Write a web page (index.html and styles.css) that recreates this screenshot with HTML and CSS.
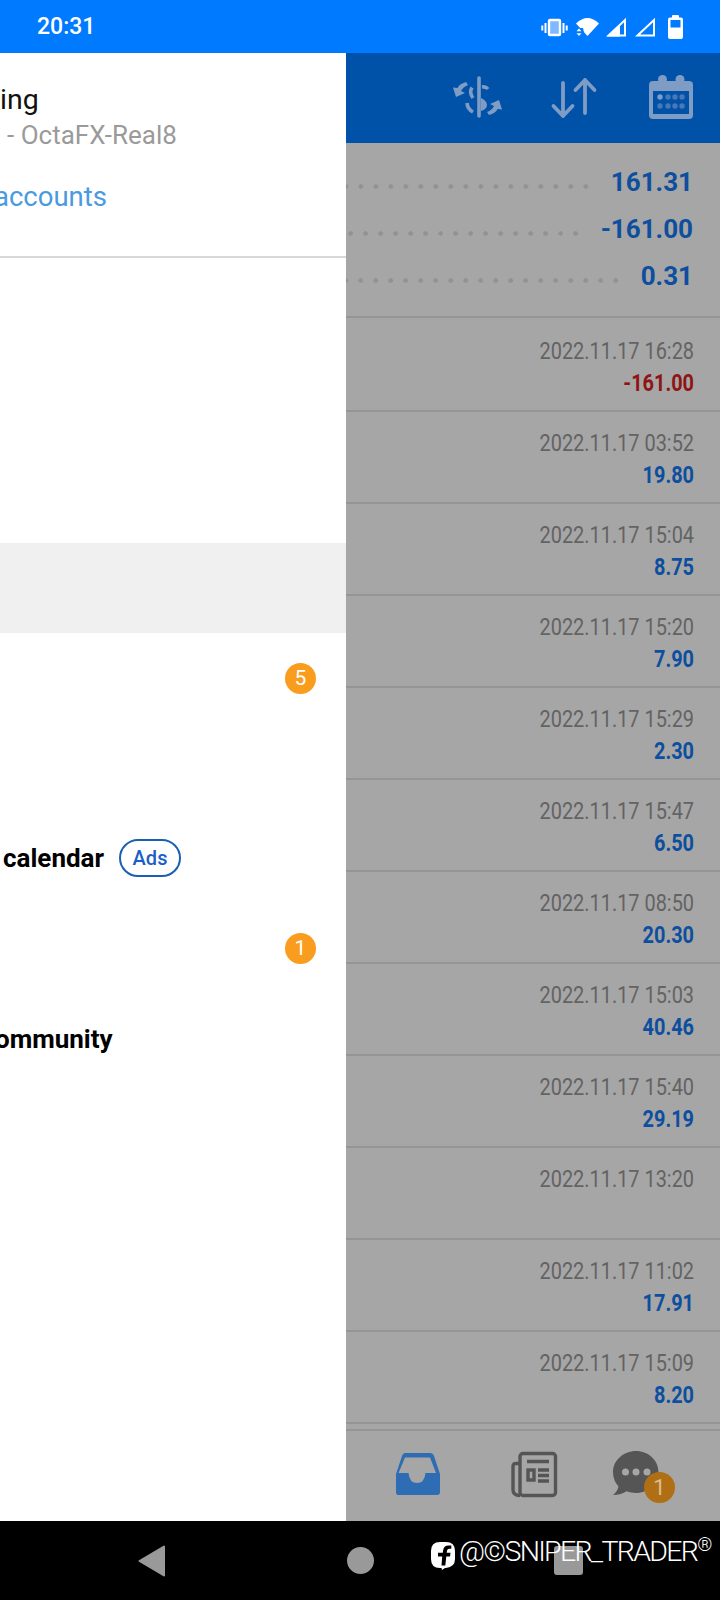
FILE: index.html
```html
<!DOCTYPE html>
<html lang="en">
<head>
<meta charset="utf-8">
<title>Trading history</title>
<link rel="stylesheet" href="styles.css">
</head>
<body>
<header class="status">
  <span class="time">20:31</span>
  <svg class="status-icons" viewBox="540 12 146 28" aria-hidden="true">
    <rect x="549" y="19" width="11" height="15" fill="#80b9ff" stroke="#fff" stroke-width="2.4" rx="1"/>
    <path d="M545.5 22v10M563.5 22v10" stroke="#fff" stroke-width="2" fill="none"/>
    <path d="M542.3 24.5v5M566.7 24.5v5" stroke="#fff" stroke-width="2" fill="none"/>
    <path d="M576 22.5Q587.5 11.500 599 22.500L587.500 35Z" fill="#fff"/>
    <path d="M575 27h8l2 9h-10Z" fill="#007aff"/>
    <path d="M579 27.500l2.500 2.700h-5ZM579 35l-2.500-2.800h5Z" fill="#fff"/>
    <path d="M608.500 34.500L625 19v15.500Z" fill="none" stroke="#fff" stroke-width="2"/>
    <path d="M607 35.500L620 23v12.500Z" fill="#fff"/>
    <path d="M637.500 34.500L654 19v15.500Z" fill="none" stroke="#fff" stroke-width="2"/>
    <path d="M672 16.500v-1.500a1 1 0 0 1 1-1h5a1 1 0 0 1 1 1v1.500h2a2 2 0 0 1 2 2v17.500a2 2 0 0 1-2 2h-11a2 2 0 0 1-2-2v-17.500a2 2 0 0 1 2-2Z" fill="#fff"/>
    <rect x="670.500" y="19" width="10" height="7.500" fill="#007aff"/>
  </svg>
</header>

<main class="app">
  <aside class="drawer">
    <div class="account">
      <p class="account-name"><span class="name-text">ing</span></p>
      <p class="account-server">- OctaFX-Real8</p>
      <p class="account-link"><span class="link-text">accounts</span></p>
    </div>
    <nav class="menu">
      <div class="menu-item"></div>
      <div class="menu-item"></div>
      <div class="menu-item"></div>
      <div class="menu-item menu-item-active"></div>
      <div class="menu-item"><span class="count">5</span></div>
      <div class="menu-item"></div>
      <div class="menu-item"><span class="label label-calendar">calendar</span><span class="ads">Ads</span></div>
      <div class="menu-item"><span class="count">1</span></div>
      <div class="menu-item"><span class="label label-community">ommunity</span></div>
    </nav>
  </aside>

  <section class="content">
    <div class="topbar">
      <svg class="top-swap" viewBox="452 75 52 46" aria-hidden="true">
        <path d="M479 78v38" stroke="#7f9cc5" stroke-width="3.600" stroke-linecap="round" fill="none"/>
        <path d="M472 87.500q-3 5 1 10.500" stroke="#7f9cc5" stroke-width="3.600" fill="none"/>
        <path d="M482 87q4-.5 6 2" stroke="#7f9cc5" stroke-width="3.600" fill="none"/>
        <path d="M481 98q6 3 6 7t-6 6Z" fill="#7f9cc5"/>
        <path d="M467 103q.5 6 6 9" stroke="#7f9cc5" stroke-width="3.600" fill="none"/>
        <path d="M466 82Q459 84 457.500 88L453 87.500 456 97 465 93 461 91Q463 87 468 85Z" fill="#7f9cc5"/>
        <path d="M489 115Q496 113 497.500 109L502 109.500 499 100 490 104 494 106Q492 110 487 112Z" fill="#7f9cc5"/>
      </svg>
      <svg class="top-sort" viewBox="550 75 48 46" aria-hidden="true">
        <path d="M563 83v33M553.500 106l9.500 10 9.500-10M585 113V80M575.500 90l9.500-10 9.500 10" fill="none" stroke="#7f9cc5" stroke-width="3.800" stroke-linecap="round" stroke-linejoin="round"/>
      </svg>
      <svg class="top-cal" viewBox="649 75 44 46" aria-hidden="true">
        <circle cx="662.500" cy="79.500" r="4.500" fill="#7f9cc5"/>
        <circle cx="680" cy="79.500" r="4.500" fill="#7f9cc5"/>
        <rect x="649" y="81" width="44" height="38" rx="4" fill="#7f9cc5"/>
        <rect x="653" y="91" width="36" height="23" fill="#0051a8"/>
        <circle cx="660" cy="97" r="2.700" fill="#7f9cc5"/>
        <circle cx="668" cy="97" r="2.700" fill="#4a78b4"/>
        <circle cx="675" cy="97" r="2.700" fill="#4a78b4"/>
        <circle cx="682" cy="97" r="2.700" fill="#4a78b4"/>
        <circle cx="660" cy="106" r="2.700" fill="#4a78b4"/>
        <circle cx="668" cy="106" r="2.700" fill="#4a78b4"/>
        <circle cx="675" cy="106" r="2.700" fill="#4a78b4"/>
        <circle cx="682" cy="106" r="2.700" fill="#4a78b4"/>
      </svg>
    </div>

    <div class="summary">
      <div class="sum-row"><span class="dots"></span><span class="sum-value">161.31</span></div>
      <div class="sum-row"><span class="dots"></span><span class="sum-value">-161.00</span></div>
      <div class="sum-row"><span class="dots"></span><span class="sum-value">0.31</span></div>
    </div>

    <ul class="deals">
      <li class="deal deal-first"><span class="deal-date">2022.11.17 16:28</span><span class="deal-amount deal-loss">-161.00</span></li>
      <li class="deal"><span class="deal-date">2022.11.17 03:52</span><span class="deal-amount">19.80</span></li>
      <li class="deal"><span class="deal-date">2022.11.17 15:04</span><span class="deal-amount">8.75</span></li>
      <li class="deal"><span class="deal-date">2022.11.17 15:20</span><span class="deal-amount">7.90</span></li>
      <li class="deal"><span class="deal-date">2022.11.17 15:29</span><span class="deal-amount">2.30</span></li>
      <li class="deal"><span class="deal-date">2022.11.17 15:47</span><span class="deal-amount">6.50</span></li>
      <li class="deal"><span class="deal-date">2022.11.17 08:50</span><span class="deal-amount">20.30</span></li>
      <li class="deal"><span class="deal-date">2022.11.17 15:03</span><span class="deal-amount">40.46</span></li>
      <li class="deal"><span class="deal-date">2022.11.17 15:40</span><span class="deal-amount">29.19</span></li>
      <li class="deal"><span class="deal-date">2022.11.17 13:20</span><span class="deal-amount"></span></li>
      <li class="deal"><span class="deal-date">2022.11.17 11:02</span><span class="deal-amount">17.91</span></li>
      <li class="deal"><span class="deal-date">2022.11.17 15:09</span><span class="deal-amount">8.20</span></li>
    </ul>

    <div class="tabs">
      <svg class="tab-inbox" viewBox="395 1446 45 60" aria-hidden="true">
        <path fill-rule="evenodd" fill="#2e6cb3" d="M405 1453h25q3 0 4 3l6 18v18q0 3-3 3h-39q-2 0-2-3v-18l6-18q1-3 3-3ZM405 1457.500l-6.500 15.500h10q1 10 8.500 10t8.500-10h10.500l-6-15.500Z"/>
      </svg>
      <svg class="tab-news" viewBox="511 1446 47 60" aria-hidden="true">
        <g fill="none" stroke="#555" stroke-width="3.400">
          <rect x="520" y="1453.500" width="35.500" height="42" rx="3"/>
          <path d="M520 1463.500h-4q-3 0-3 3v23q0 6 7 6"/>
          <rect x="528" y="1470" width="6" height="10"/>
          <path d="M527 1461.500h22M538 1470h11M538 1475.500h11M538 1481h11"/>
        </g>
      </svg>
      <div class="tab-chat">
        <svg class="chat-icon" viewBox="613 1446 46 60" aria-hidden="true">
          <path fill="#555" d="M636 1451c12.500 0 22.500 9.500 22.500 21s-10 21-22.500 21q-5 0-9.500-1.700q-5 3.700-13.500 3.700q4.500-3.500 5.500-8.500q-5.500-6-5.500-14.500c0-11.500 10.500-21 23-21Z"/>
          <circle cx="625.500" cy="1472" r="3.500" fill="#a6a6a6"/>
          <circle cx="636" cy="1472" r="3.500" fill="#a6a6a6"/>
          <circle cx="647" cy="1472" r="3.500" fill="#a6a6a6"/>
        </svg>
        <span class="chat-badge">1</span>
      </div>
    </div>
  </section>
</main>

<footer class="navbar">
  <svg class="nav-back" viewBox="0 0 28 32" aria-hidden="true"><path d="M26 1.500v29L1.500 16Z" fill="#999" stroke="#999" stroke-width="2" stroke-linejoin="round"/></svg>
  <span class="nav-home"></span>
  <span class="nav-recent"></span>
  <div class="watermark">
    <svg class="fb" viewBox="0 0 24 28" aria-hidden="true">
      <path fill-rule="evenodd" fill="#fff" d="M9 0h6q9 0 9 9v8q0 8-9 9h-1l-3 2-.5-2H9q-9 0-9-9V9q0-9 9-9ZM10.500 23.500h3.800l1-9h3.700l.5-3.800h-3.800l.3-2q.3-2 2.300-2h2V3.500h-2.800q-4.800 0-5.400 5l-.3 2.200H7v3.800h4.200Z"/>
    </svg>
    <span class="mark-text">@©SNIPER_TRADER<sup class="reg">®</sup></span>
  </div>
</footer>
</body>
</html>
```
FILE: styles.css
```css
* { box-sizing: border-box; }
html, body { margin: 0; padding: 0; }
body {
  width: 720px;
  height: 1600px;
  overflow: hidden;
  display: flex;
  flex-direction: column;
  font-family: Roboto, "Liberation Sans", sans-serif;
  background: #000;
}
p, ul { margin: 0; padding: 0; }
ul { list-style: none; }

.status {
  height: 53px;
  flex: none;
  display: flex;
  align-items: center;
  justify-content: space-between;
  padding: 0 34px 0 37px;
  background: #007aff;
  color: #fff;
}
.time { font-size: 23px; font-weight: 500; }
.status-icons { width: 146px; height: 28px; }

.app { flex: none; height: 1468px; display: flex; }

.drawer { width: 346px; flex: none; background: #fff; overflow: hidden; }
.account { height: 203px; border-bottom: 2px solid #d8d8d8; box-sizing: content-box; }
.account-name { font-size: 28.500px; line-height: 32px; color: #111; padding-top: 31px; }
.account-server { font-size: 26px; line-height: 32px; color: #9a9a9a; padding: 3px 0 0 7px; }
.account-link { font-size: 27.500px; line-height: 32px; color: #4a9ae0; padding-top: 30px; }
.name-text { margin-left: 0; }
.link-text { display: inline-block; margin-left: -6px; }

.menu { padding-top: 15px; }
.menu-item {
  height: 90px;
  display: flex;
  align-items: center;
  padding-right: 30px;
}
.menu-item-active { background: #f0f0f0; }
.count {
  width: 31px;
  height: 31px;
  margin-left: auto;
  border-radius: 50%;
  background: #fa9c1e;
  color: #fff;
  font-size: 21px;
  line-height: 31px;
  text-align: center;
}
.label { font-size: 26px; font-weight: 700; color: #000; }
.label-calendar { margin-left: 3px; }
.label-community { margin: 2px 0 0 -5px; }
.ads {
  margin-left: 15px;
  width: 62px;
  height: 38px;
  border: 2px solid #1a5fb4;
  border-radius: 19px;
  color: #1a5fc8;
  font-size: 20px;
  font-weight: 500;
  line-height: 34px;
  text-align: center;
}

.content { flex: 1; display: flex; flex-direction: column; background: #a6a6a6; overflow: hidden; }

.topbar {
  height: 90px;
  flex: none;
  background: #0051a8;
  display: flex;
  align-items: center;
  padding-left: 106px;
}
.topbar svg { height: 46px; flex: none; }
.top-swap { width: 52px; }
.top-sort { width: 48px; margin-left: 46px; }
.top-cal { width: 44px; margin-left: 51px; }

.summary {
  height: 175px;
  flex: none;
  padding-top: 15px;
  border-bottom: 2px solid #959595;
}
.sum-row {
  height: 47px;
  display: flex;
  align-items: center;
  padding-right: 27px;
}
.dots {
  flex: 1;
  height: 5px;
  margin: 10px 17.500px 0 0;
  background: radial-gradient(circle at center, #929292 2px, transparent 2.500px) right center / 15px 5px repeat-x;
}
.sum-value {
  color: #0d4f9e;
  font-size: 26px;
  font-weight: 700;
}

.deals { flex: none; }
.deal {
  height: 92px;
  padding: 16px 26px 0 0;
  border-bottom: 2px solid #959595;
}
.deal-first { height: 94px; padding-top: 18px; }
.deal-date, .deal-amount {
  display: block;
  height: 32px;
  line-height: 32px;
  font-size: 23px;
  text-align: right;
  transform: scaleX(.865);
  transform-origin: right center;
}
.deal-date { color: #636363; }
.deal-amount { color: #0d4f9e; font-weight: 700; }
.deal-loss { color: #8f1414; }

.tabs {
  flex: none;
  height: 92px;
  margin-top: 5px;
  border-top: 2px solid #959595;
  display: flex;
  align-items: center;
  padding-left: 49px;
}
.tabs svg { height: 60px; flex: none; }
.tab-inbox { width: 45px; }
.tab-news { width: 47px; margin-left: 71px; }
.tab-chat { position: relative; width: 46px; height: 60px; margin-left: 55px; }
.chat-icon { width: 46px; display: block; }
.chat-badge {
  position: absolute;
  left: 31px;
  top: 26px;
  width: 31px;
  height: 31px;
  border-radius: 50%;
  background: #b06f14;
  color: #d9bd94;
  font-size: 22px;
  line-height: 31px;
  text-align: center;
}

.navbar {
  position: relative;
  flex: none;
  height: 79px;
  background: #000;
  display: flex;
  align-items: center;
  padding-left: 138px;
}
.nav-back { width: 28px; height: 32px; flex: none; }
.nav-home {
  width: 27px;
  height: 27px;
  margin-left: 181px;
  border-radius: 50%;
  background: #999;
}
.nav-recent {
  width: 29px;
  height: 29px;
  margin-left: 180px;
  border-radius: 3px;
  background: #999;
}
.watermark {
  position: absolute;
  left: 431px;
  top: 15px;
  display: flex;
  align-items: flex-start;
  color: #fff;
}
.fb { width: 24px; height: 28px; flex: none; margin-top: 6px; }
.mark-text { margin-left: 4px; font-size: 28.500px; font-weight: 300; letter-spacing: -1.700px; line-height: 32px; white-space: nowrap; }
.reg { font-size: 19px; line-height: 0; vertical-align: 10px; letter-spacing: 0; }
```
